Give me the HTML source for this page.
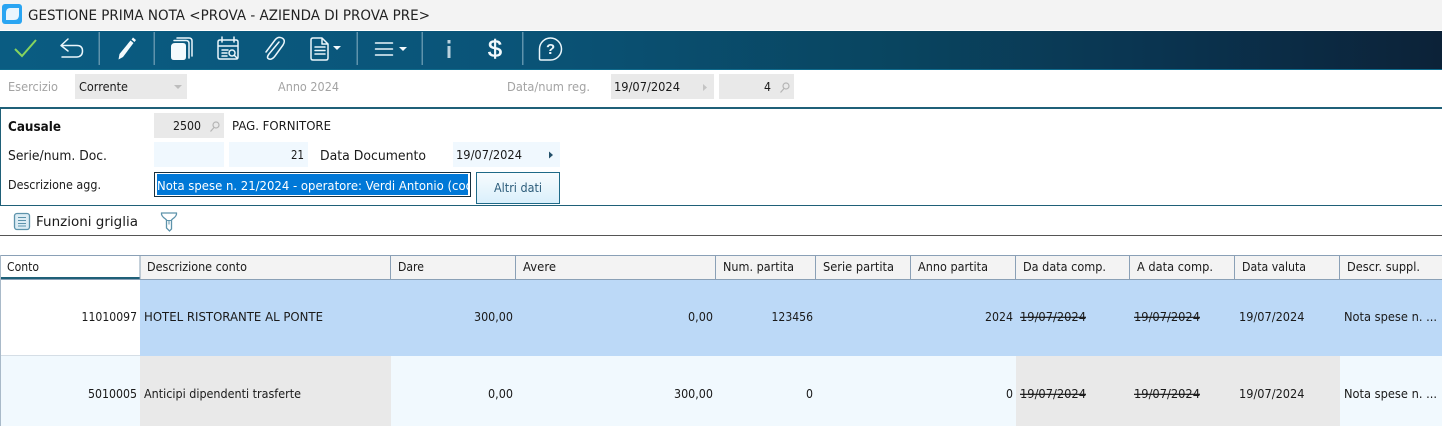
<!DOCTYPE html>
<html lang="it"><head><meta charset="utf-8"><title>Gestione Prima Nota</title>
<style>
html,body{margin:0;padding:0;background:#fff;width:1442px;height:426px;overflow:hidden}
svg{display:block}
text{font-family:"DejaVu Sans",sans-serif;font-size:12px;fill:#1a1a1a}
.t{font-family:"DejaVu Sans",sans-serif;font-size:14.500px;fill:#222}
.g{fill:#a3a3a3}
.l{font-size:13px}
.b{font-family:"DejaVu Sans",sans-serif;font-weight:bold;font-size:13.500px;fill:#111}
.s{text-decoration:line-through}
.i{fill:none;stroke:#eaf6fb;stroke-width:1.5;stroke-linecap:round;stroke-linejoin:round}
.sep{fill:#5f93ac}
.mg{fill:none;stroke:#b5b5b5;stroke-width:1.2}
</style></head><body>
<svg width="1442" height="426" viewBox="0 0 1442 426" xmlns="http://www.w3.org/2000/svg">
<defs>
<linearGradient id="tb" x1="0" x2="1" y1="0" y2="0"><stop offset="0" stop-color="#0a5c82"/><stop offset=".35" stop-color="#0a5478"/><stop offset=".62" stop-color="#094560"/><stop offset=".8" stop-color="#0a3450"/><stop offset="1" stop-color="#0c2238"/></linearGradient>
<linearGradient id="btn" x1="0" x2="0" y1="0" y2="1"><stop offset="0" stop-color="#f8fcfe"/><stop offset="1" stop-color="#d9effb"/></linearGradient>
</defs>
<!-- title bar -->
<rect width="1442" height="30" fill="#f3f3f3"/>
<rect x="2" y="4" width="20" height="20" rx="3" fill="#2aa5f2"/>
<path d="M10 8h9v7q0 5-5 5H6v-7q0-5 4-5z" fill="#e9f5fd"/>
<text class="t" x="28" y="20" textLength="402" lengthAdjust="spacingAndGlyphs">GESTIONE PRIMA NOTA &lt;PROVA - AZIENDA DI PROVA PRE&gt;</text>
<!-- toolbar -->
<rect y="31" width="1442" height="39" fill="url(#tb)"/>
<rect y="69" width="1442" height="1" fill="#0f6a8c"/>
<rect x="98.500" y="32" width="1.500" height="33" class="sep"/>
<rect x="153.500" y="32" width="1.500" height="33" class="sep"/>
<rect x="356.500" y="32" width="1.500" height="33" class="sep"/>
<rect x="421.500" y="32" width="1.500" height="33" class="sep"/>
<rect x="522" y="32" width="1.500" height="33" class="sep"/>
<path d="M15 49l7 7 14-16" fill="none" stroke="#86d45e" stroke-width="2"/>
<path class="i" d="M68 39l-7 6.500 7 5.500M61 45.500h16q5.500 0 5.500 5.500t-5.500 6H62"/>
<path d="M133 37.500l3 2.500-1.500 2-3-2.500zM130.500 40.500l3 2.500-10.500 14-4.500 2.500 1-5.500z" fill="#f3fafd"/>
<path class="i" d="M177 38h12q3 0 3 3v15" stroke-width="1.300"/>
<path class="i" d="M174 40.500h12q3 0 3 3V58" stroke-width="1.300"/>
<path d="M175 43h8q3 0 3 3v11q0 3-3 3h-9q-3 0-3-3V47q0-4 4-4z" fill="#f3fafd"/>
<path class="i" d="M220 40h16q2 0 2 2v15q0 2-2 2h-16q-2 0-2-2V42q0-2 2-2zM218 46h20M222 37v5M234 37v5M222 50h6M222 53h5M222 56h5"/>
<circle cx="232" cy="53" r="3" class="i"/><path class="i" d="M234.500 55.500l3 3"/>
<path class="i" d="M279 43l-10 12q-3 4 0 5t6-3l8-11q3-5-1-7t-7 2l-9 12" transform="translate(0 -1)"/>
<path class="i" d="M313 38h9l6 6v14q0 2-2 2h-13q-2 0-2-2V40q0-2 2-2zM322 38v6h6M315 47h10M315 50.500h10M315 54h10"/>
<path d="M333 46h8l-4 4z" fill="#f3fafd"/>
<path class="i" d="M375.500 43h17M375.500 49h17M375.500 55h17" stroke-width="1.800"/>
<path d="M399 47h8l-4 4z" fill="#f3fafd"/>
<rect x="447.500" y="40" width="3" height="3.500" fill="#b9d2de"/>
<rect x="447.500" y="46" width="3" height="12" fill="#b9d2de"/>
<text x="488" y="57" style="font-family:'Liberation Sans',sans-serif;font-size:24px;font-weight:normal;fill:#f3fafd;stroke:#f3fafd;stroke-width:.5" textLength="14" lengthAdjust="spacingAndGlyphs">$</text>
<path class="i" d="M550.500 38a11 11 0 0 1 0 22H541q-1.500 0-1.500-1.500V49a11 11 0 0 1 11-11z"/>
<text x="546" y="54" style="font-family:'Liberation Sans',sans-serif;font-size:15px;font-weight:bold;fill:#eaf6fb">?</text>
<!-- form row 1 -->
<text class="g" x="8" y="91" textLength="50" lengthAdjust="spacingAndGlyphs">Esercizio</text>
<rect x="75" y="74" width="112" height="25" fill="#e9e9e9"/>
<text x="79" y="91" textLength="49" lengthAdjust="spacingAndGlyphs">Corrente</text>
<path d="M174 85h8l-4 4z" fill="#bdbdbd"/>
<text class="g" x="278" y="91" textLength="61" lengthAdjust="spacingAndGlyphs">Anno 2024</text>
<text class="g" x="507" y="91" textLength="83" lengthAdjust="spacingAndGlyphs">Data/num reg.</text>
<rect x="611" y="74" width="103" height="25" fill="#e9e9e9"/>
<text x="614" y="91" textLength="66" lengthAdjust="spacingAndGlyphs">19/07/2024</text>
<path d="M703 84l4 3.500-4 3.500z" fill="#c4c4c4"/>
<rect x="719" y="74" width="75" height="25" fill="#e9e9e9"/>
<text x="764" y="91" textLength="7" lengthAdjust="spacingAndGlyphs">4</text>
<circle cx="786" cy="86" r="3" class="mg"/><path class="mg" d="M784 88.500l-3.500 4"/>
<rect y="107" width="1442" height="2" fill="#1f6078"/>
<!-- form row 2 -->
<rect x="0" y="109" width="1" height="96" fill="#1f6078"/>
<text class="b" x="8" y="131" textLength="53" lengthAdjust="spacingAndGlyphs">Causale</text>
<rect x="154" y="113" width="70" height="25" fill="#e9e9e9"/>
<text x="173" y="130" textLength="28" lengthAdjust="spacingAndGlyphs">2500</text>
<circle cx="216" cy="125" r="3" class="mg"/><path class="mg" d="M214 127.500l-3.500 4"/>
<text x="232" y="130" textLength="99" lengthAdjust="spacingAndGlyphs">PAG. FORNITORE</text>
<text class="l" x="8" y="160" textLength="99" lengthAdjust="spacingAndGlyphs">Serie/num. Doc.</text>
<rect x="154" y="142" width="70" height="25" fill="#f0f8fe"/>
<rect x="229" y="142" width="79" height="25" fill="#f0f8fe"/>
<text x="291" y="159" textLength="13" lengthAdjust="spacingAndGlyphs">21</text>
<text class="l" x="320" y="160" textLength="106" lengthAdjust="spacingAndGlyphs">Data Documento</text>
<rect x="453" y="142" width="107" height="25" fill="#f0f8fe"/>
<text x="456" y="159" textLength="66" lengthAdjust="spacingAndGlyphs">19/07/2024</text>
<path d="M549 151.500l4 3.500-4 3.500z" fill="#24506a"/>
<text x="8" y="189" textLength="93" lengthAdjust="spacingAndGlyphs">Descrizione agg.</text>
<rect x="154.500" y="172.500" width="316" height="24" fill="#fff" stroke="#16303f" stroke-width="1"/>
<rect x="157" y="174" width="311" height="21" fill="#0078d7"/>
<svg x="157" y="172" width="311" height="25"><text x="0" y="18" style="fill:#fff" textLength="316" lengthAdjust="spacingAndGlyphs">Nota spese n. 21/2024 - operatore: Verdi Antonio (cod</text></svg>
<rect x="476.500" y="172.500" width="83" height="31" fill="url(#btn)" stroke="#1f6a88"/>
<text x="494" y="192" style="fill:#2c5c7a" textLength="48" lengthAdjust="spacingAndGlyphs">Altri dati</text>
<rect y="205" width="1442" height="1" fill="#1f6078"/>
<!-- grid tools -->
<rect x="14.500" y="213.500" width="15" height="16" rx="2.500" fill="#dcecf4" stroke="#5d93ab" stroke-width="1.300"/>
<path d="M18 217.500h8M18 220.500h8M18 223.500h8M18 226h8" stroke="#5d93ab" stroke-width="1"/>
<text class="l" x="36" y="226" textLength="102" lengthAdjust="spacingAndGlyphs">Funzioni griglia</text>
<path d="M161.500 213h15q.5 3-4 6l-1 1v9l-2 2-3-3v-8l-1-1q-4.500-3-4-6z" fill="none" stroke="#5d93ab" stroke-width="1.300"/>
<path d="M167 220.500h4M169 220.500v4" stroke="#5d93ab"/>
<rect y="235" width="1442" height="1" fill="#555"/>
<!-- grid header -->
<rect y="255" width="1442" height="24" fill="#f3f3f3"/>
<rect x="1" y="256" width="139" height="21" fill="#fff"/>
<rect x="0" y="255" width="1442" height="1" fill="#8aa0b6"/>
<rect x="0" y="279" width="1442" height="1" fill="#8aa0b6"/>
<rect x="1" y="277" width="139" height="2" fill="#1f6078"/>
<g fill="#8aa0b6"><rect x="139.500" y="255" width="1" height="24"/><rect x="390" y="255" width="1" height="24"/><rect x="515" y="255" width="1" height="24"/><rect x="715" y="255" width="1" height="24"/><rect x="815" y="255" width="1" height="24"/><rect x="910" y="255" width="1" height="24"/><rect x="1015" y="255" width="1" height="24"/><rect x="1129" y="255" width="1" height="24"/><rect x="1234" y="255" width="1" height="24"/><rect x="1339" y="255" width="1" height="24"/></g>
<text x="7" y="271" textLength="32" lengthAdjust="spacingAndGlyphs">Conto</text>
<text x="147" y="271" textLength="100" lengthAdjust="spacingAndGlyphs">Descrizione conto</text>
<text x="398" y="271" textLength="26" lengthAdjust="spacingAndGlyphs">Dare</text>
<text x="523" y="271" textLength="33" lengthAdjust="spacingAndGlyphs">Avere</text>
<text x="723" y="271" textLength="71" lengthAdjust="spacingAndGlyphs">Num. partita</text>
<text x="823" y="271" textLength="71" lengthAdjust="spacingAndGlyphs">Serie partita</text>
<text x="918" y="271" textLength="70" lengthAdjust="spacingAndGlyphs">Anno partita</text>
<text x="1023" y="271" textLength="83" lengthAdjust="spacingAndGlyphs">Da data comp.</text>
<text x="1137" y="271" textLength="76" lengthAdjust="spacingAndGlyphs">A data comp.</text>
<text x="1242" y="271" textLength="64" lengthAdjust="spacingAndGlyphs">Data valuta</text>
<text x="1347" y="271" textLength="73" lengthAdjust="spacingAndGlyphs">Descr. suppl.</text>
<!-- row 1 -->
<rect x="140" y="280" width="1302" height="76" fill="#bcd9f7"/>
<rect y="355" width="140" height="1" fill="#d5dee6"/>
<!-- row 2 -->
<rect x="1" y="356" width="1441" height="70" fill="#f1f9fe"/>
<rect x="140" y="356" width="251" height="70" fill="#e9e9e9"/>
<rect x="1016" y="356" width="324" height="70" fill="#e9e9e9"/>
<rect x="0" y="255" width="1" height="171" fill="#a9bac9"/>
<g>
<text x="81.500" y="321" textLength="55.500" lengthAdjust="spacingAndGlyphs">11010097</text>
<text x="144" y="321" textLength="179" lengthAdjust="spacingAndGlyphs">HOTEL RISTORANTE AL PONTE</text>
<text x="474" y="321" textLength="39" lengthAdjust="spacingAndGlyphs">300,00</text>
<text x="688" y="321" textLength="25" lengthAdjust="spacingAndGlyphs">0,00</text>
<text x="771.500" y="321" textLength="41.500" lengthAdjust="spacingAndGlyphs">123456</text>
<text x="985" y="321" textLength="28" lengthAdjust="spacingAndGlyphs">2024</text>
<text class="s" x="1020" y="321" textLength="66" lengthAdjust="spacingAndGlyphs">19/07/2024</text>
<text class="s" x="1134" y="321" textLength="66" lengthAdjust="spacingAndGlyphs">19/07/2024</text>
<text x="1239" y="321" textLength="65.500" lengthAdjust="spacingAndGlyphs">19/07/2024</text>
<text x="1344" y="321" textLength="93" lengthAdjust="spacingAndGlyphs">Nota spese n. ...</text>
<text x="88" y="398" textLength="49" lengthAdjust="spacingAndGlyphs">5010005</text>
<text x="144" y="398" textLength="157" lengthAdjust="spacingAndGlyphs">Anticipi dipendenti trasferte</text>
<text x="488" y="398" textLength="25" lengthAdjust="spacingAndGlyphs">0,00</text>
<text x="674" y="398" textLength="39" lengthAdjust="spacingAndGlyphs">300,00</text>
<text x="806" y="398" textLength="7" lengthAdjust="spacingAndGlyphs">0</text>
<text x="1006" y="398" textLength="7" lengthAdjust="spacingAndGlyphs">0</text>
<text class="s" x="1020" y="398" textLength="66" lengthAdjust="spacingAndGlyphs">19/07/2024</text>
<text class="s" x="1134" y="398" textLength="66" lengthAdjust="spacingAndGlyphs">19/07/2024</text>
<text x="1239" y="398" textLength="65.500" lengthAdjust="spacingAndGlyphs">19/07/2024</text>
<text x="1344" y="398" textLength="93" lengthAdjust="spacingAndGlyphs">Nota spese n. ...</text>
</g>
</svg>
</body></html>
